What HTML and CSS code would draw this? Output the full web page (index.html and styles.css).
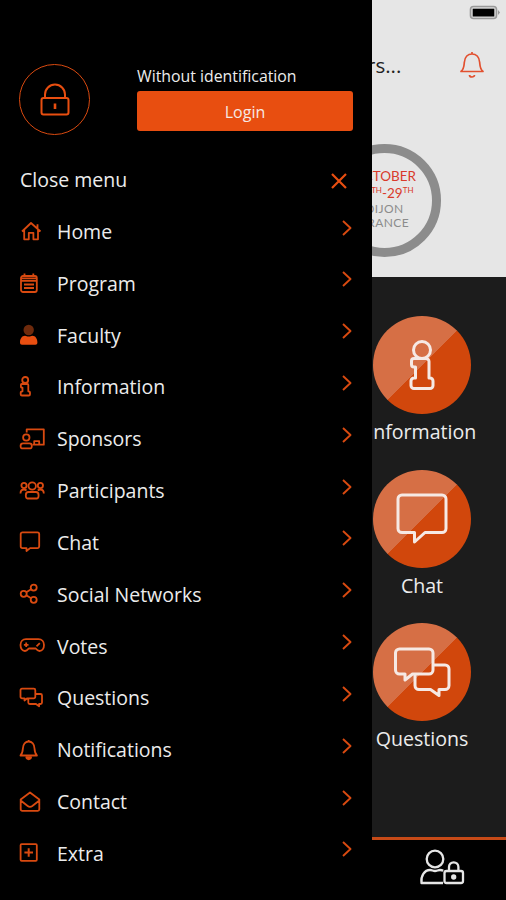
FILE: index.html
```
<!DOCTYPE html>
<html lang="en">
<head>
    <meta charset="UTF-8">
    <meta name="viewport" content="width=device-width, initial-scale=1.0">
    <title>Event App - Menu</title>
    <link rel="stylesheet" href="styles.css">
</head>
<body>
    <!-- Home screen, behind the menu -->
    <div class="page">
        <header class="header">
            <div class="status">
                <svg width="31" height="15" viewBox="0 0 31 15"><rect x="1.5" y="1.5" width="26" height="12" rx="3" fill="#ddd" stroke="#999" stroke-width="1.6"/><rect x="3.7" y="3.7" width="21.6" height="7.8" fill="#000"/><path d="M29 5v5l2-2.5z" fill="#999"/></svg>
            </div>
            <div class="title-bar">
                <span class="title">rs...</span>
                <svg class="bell" width="26" height="28" viewBox="0 0 26 28"><path d="M13 1v2M2 20.5c3-2.500 3-5 3.300-9C5.700 6 9 3 13 3s7.300 3 7.700 8.500c.3 4 .3 6.500 3.300 9zM10.500 24a2.500 2 0 0 0 5 0"/></svg>
            </div>
            <div class="badge">
                <span class="red">OCTOBER</span>
                <span class="red days">28<sup>TH</sup>-29<sup>TH</sup></span>
                <span>DIJON</span>
                <span>FRANCE</span>
            </div>
        </header>

        <main class="tiles">
            <div class="tile">
                <div class="disc">
                    <svg width="98" height="98" viewBox="0 0 98 98"><circle cx="49" cy="34" r="8.500"/><path d="M42 42.500H53a3 3 0 0 1 3 3V62h1a3 3 0 0 1 3 3v4.500a3 3 0 0 1-3 3H41a3 3 0 0 1-3-3V65a3 3 0 0 1 3-3h1.500V51H41a2.500 2.500 0 0 1-2.500-2.500V45a2.500 2.500 0 0 1 2.500-2.500z"/></svg>
                </div>
                <span>Information</span>
            </div>
            <div class="tile">
                <div class="disc">
                    <svg width="98" height="98" viewBox="0 0 98 98"><path d="M29 25H69a4 4 0 0 1 4 4V58.500a4 4 0 0 1-4 4H52L41.500 72V62.500H29a4 4 0 0 1-4-4V29a4 4 0 0 1 4-4z"/></svg>
                </div>
                <span>Chat</span>
            </div>
            <div class="tile">
                <div class="disc">
                    <svg width="98" height="98" viewBox="0 0 98 98"><path d="M26.500 26H56a4 4 0 0 1 4 4V47a4 4 0 0 1-4 4H39.500L32 57V51H26.500a4 4 0 0 1-4-4V30a4 4 0 0 1 4-4zM60 42H72a4 4 0 0 1 4 4V62.500a4 4 0 0 1-4 4H66V72.500L57.500 66.500H46a4 4 0 0 1-4-4V51"/></svg>
                </div>
                <span>Questions</span>
            </div>
        </main>

        <footer class="footer">
            <svg width="46" height="38" viewBox="0 0 46 38"><circle cx="16" cy="11" r="8.300"/><path d="M24 35H2.500c-1-7 3-13 8.500-13 2 0 3 1 5 1s3-1 5-1c1.200 0 2.200.2 3.200.8"/><rect x="25.500" y="23" width="18.500" height="12" rx="2"/><path d="M30 23v-4a4.700 4.700 0 0 1 9.400 0v4"/><circle cx="34.700" cy="29" r="1.500" fill="#e6e6e6"/></svg>
        </footer>
    </div>

    <!-- Side menu -->
    <nav class="drawer">
        <div class="account">
            <div class="avatar">
                <svg width="32" height="36" viewBox="0 0 32 36"><rect x="2.500" y="16" width="27" height="16.500" rx="2"/><path d="M6 16v-3.500a10 10 0 0 1 20 0V16"/><path d="M16 21.500v5.500" stroke-width="2.600"/></svg>
            </div>
            <div class="login">
                <span>Without identification</span>
                <button class="login-btn">Login</button>
            </div>
        </div>

        <div class="close">
            <span>Close menu</span>
            <svg width="18" height="18" viewBox="0 0 18 18"><path d="M2 2l14 14M16 2L2 16"/></svg>
        </div>

        <ul class="menu">
            <li>
                <svg class="icon" viewBox="0 0 26 22"><path d="M3 10.500L12 2l9.500 8.500M18.500 7V3.200M5.200 9v9.300h4.600v-6.500h4.600v6.500h4.600V9"/></svg>
                <span>Home</span>
                <svg class="chevron" viewBox="0 0 10 16"><path d="M1 1l7.500 7L1 15"/></svg>
            </li>
            <li>
                <svg class="icon" viewBox="0 0 26 22"><rect x="2" y="4" width="15.800" height="16" rx="2"/><path d="M5.500 1.500v3M14.300 1.500v3M2 6.300h16M2 8.800h16M5 12.500h10M5 16h10"/></svg>
                <span>Program</span>
                <svg class="chevron" viewBox="0 0 10 16"><path d="M1 1l7.500 7L1 15"/></svg>
            </li>
            <li>
                <svg class="icon solid" viewBox="0 0 26 22"><circle cx="9.700" cy="6" r="5.200" fill="#6e2a0c"/><path d="M1 18.500c0-4 2-6.800 5-6.800 1.500 0 2 .8 3.700.8s2.200-.8 3.700-.8c3 0 5 2.800 5 6.800 0 1.500-.8 2.200-2 2.200H3c-1.200 0-2-.7-2-2.200z"/></svg>
                <span>Faculty</span>
                <svg class="chevron" viewBox="0 0 10 16"><path d="M1 1l7.500 7L1 15"/></svg>
            </li>
            <li>
                <svg class="icon" viewBox="0 0 26 22"><circle cx="6.200" cy="4" r="3"/><path d="M2.700 8h5.600c.7 0 1 .4 1 1v6.300c1.300 0 1.700.4 1.700 1.400v1.500c0 .9-.4 1.300-1.300 1.300H3c-.9 0-1.300-.4-1.300-1.300v-1.500c0-1 .4-1.400 1.800-1.400v-3.600c-1.200 0-1.600-.3-1.600-1.200V9c0-.6.3-1 .8-1z"/></svg>
                <span>Information</span>
                <svg class="chevron" viewBox="0 0 10 16"><path d="M1 1l7.500 7L1 15"/></svg>
            </li>
            <li>
                <svg class="icon" viewBox="0 0 26 22"><path d="M7.700 4.500V1.300h17.100v15.400H13.500M15.200 16.500v-3.300h5v3.300"/><circle cx="7.300" cy="9.500" r="3.200"/><path d="M4 15.300h6.500c1.500 0 2.300 1 2.300 2.500s-.4 2.500-1.300 2.500h-8.700c-.9 0-1.200-1-1.200-2.500s.9-2.500 2.400-2.500z"/></svg>
                <span>Sponsors</span>
                <svg class="chevron" viewBox="0 0 10 16"><path d="M1 1l7.500 7L1 15"/></svg>
            </li>
            <li>
                <svg class="icon" viewBox="0 0 26 22"><circle cx="13.200" cy="6" r="3.700"/><circle cx="5" cy="5.500" r="2.600"/><circle cx="21.400" cy="5.500" r="2.600"/><path d="M9.500 12h7.400c1.600 0 2.700 1.200 2.700 3.300 0 2-.5 3.200-1.600 3.200H8.400c-1.100 0-1.600-1.200-1.600-3.200 0-2.100 1.100-3.300 2.700-3.300zM1.500 13.500c0-2.500 1.500-4 3.500-4 1 0 1.800.4 2.500 1M24.800 13.500c0-2.500-1.500-4-3.500-4-1 0-1.800.4-2.500 1"/></svg>
                <span>Participants</span>
                <svg class="chevron" viewBox="0 0 10 16"><path d="M1 1l7.500 7L1 15"/></svg>
            </li>
            <li>
                <svg class="icon" viewBox="0 0 26 22"><path d="M3.500 1.300h14.900a1.800 1.800 0 0 1 1.800 1.800v12.200a1.800 1.800 0 0 1-1.800 1.800h-7.300L7.500 20v-2.900h-4a1.800 1.800 0 0 1-1.800-1.800V3.100a1.800 1.800 0 0 1 1.800-1.800z"/></svg>
                <span>Chat</span>
                <svg class="chevron" viewBox="0 0 10 16"><path d="M1 1l7.500 7L1 15"/></svg>
            </li>
            <li>
                <svg class="icon" viewBox="0 0 26 22"><circle cx="4.700" cy="10.800" r="3"/><circle cx="14.700" cy="4.600" r="3"/><circle cx="14.700" cy="16.800" r="3"/><path d="M7.300 9.300l4.800-3M7.300 12.300l4.800 3"/></svg>
                <span>Social Networks</span>
                <svg class="chevron" viewBox="0 0 10 16"><path d="M1 1l7.500 7L1 15"/></svg>
            </li>
            <li>
                <svg class="icon" viewBox="0 0 26 22"><path d="M7 4.200h12.400c3.500 0 5.600 2.500 5.600 5.800s-1.800 6-4.500 6c-1.800 0-2.600-1-3.800-2.500H9.800C8.500 15 7.700 16 6 16c-2.800 0-4.500-2.700-4.500-6S3.600 4.200 7 4.200zM7.200 7.500v4.600M4.900 9.800h4.600M17.500 11.300l3.300-3.100"/></svg>
                <span>Votes</span>
                <svg class="chevron" viewBox="0 0 10 16"><path d="M1 1l7.500 7L1 15"/></svg>
            </li>
            <li>
                <svg class="icon" viewBox="0 0 26 22"><path d="M3 1.700h11.800a1.500 1.500 0 0 1 1.500 1.500v6.600a1.500 1.500 0 0 1-1.500 1.500H8.300L5.500 13.500v-2.200H3a1.500 1.500 0 0 1-1.500-1.500V3.200A1.500 1.500 0 0 1 3 1.700zM16.300 7h5.200a1.500 1.500 0 0 1 1.500 1.500v7a1.500 1.500 0 0 1-1.500 1.500h-1.400v2.300L17 17h-6.200a1.500 1.500 0 0 1-1.500-1.500v-4"/></svg>
                <span>Questions</span>
                <svg class="chevron" viewBox="0 0 10 16"><path d="M1 1l7.500 7L1 15"/></svg>
            </li>
            <li>
                <svg class="icon" viewBox="0 0 26 22"><path d="M9.700 1v1.200M1.500 16.500c2-2 2.200-3.700 2.400-7 .2-4.200 2.500-7 5.800-7s5.600 2.800 5.800 7c.2 3.300.4 5 2.400 7z"/><path d="M7.300 18.200h4.800c-.4 2.700-4.400 2.700-4.800 0z" fill="#e84e10"/></svg>
                <span>Notifications</span>
                <svg class="chevron" viewBox="0 0 10 16"><path d="M1 1l7.500 7L1 15"/></svg>
            </li>
            <li>
                <svg class="icon" viewBox="0 0 26 22"><path d="M1.700 8.500L11 1.500l9.300 7v9.800a1.500 1.500 0 0 1-1.500 1.500H3.200a1.500 1.500 0 0 1-1.500-1.500zM1.700 9.500l7 5.500c1.500 1.200 3 1.200 4.600 0l7-5.500"/></svg>
                <span>Contact</span>
                <svg class="chevron" viewBox="0 0 10 16"><path d="M1 1l7.500 7L1 15"/></svg>
            </li>
            <li>
                <svg class="icon" viewBox="0 0 26 22"><rect x="1.600" y="2.200" width="16.200" height="16.600" rx="1"/><path d="M9.700 6.200v8.600M5.400 10.500H14" stroke-width="2"/></svg>
                <span>Extra</span>
                <svg class="chevron" viewBox="0 0 10 16"><path d="M1 1l7.500 7L1 15"/></svg>
            </li>
        </ul>
    </nav>
</body>
</html>
```
FILE: styles.css
```
* {
    box-sizing: border-box;
}

body {
    margin: 0;
    width: 506px;
    height: 900px;
    overflow: hidden;
    position: relative;
    background-color: #000;
    color: #ececec;
    font-family: "Open Sans", "Noto Sans", sans-serif;
}

svg {
    display: block;
    fill: none;
    stroke-linejoin: round;
}

/* Home screen */
.page {
    height: 900px;
    display: flex;
    flex-direction: column;
}

.header {
    height: 277px;
    background-color: #e6e6e6;
}

.status {
    display: flex;
    justify-content: flex-end;
    padding: 5px 6px 0 0;
}

.title-bar {
    display: flex;
    align-items: center;
    justify-content: space-between;
    height: 28px;
    margin-top: 31px;
    padding: 0 21px 0 367px;
}

.title {
    color: #222;
    font-size: 20.500px;
}

.bell {
    stroke: #e2502f;
    stroke-width: 1.7;
}

.badge {
    width: 113px;
    height: 113px;
    margin: 65px 0 0 328px;
    padding-bottom: 3px;
    border: 9px solid #8c8c8c;
    border-radius: 50%;
    display: flex;
    flex-direction: column;
    align-items: center;
    justify-content: center;
    color: #8c8c8c;
    font-family: Lato, sans-serif;
    font-size: 12px;
    letter-spacing: 0.4px;
    line-height: 14px;
    white-space: nowrap;
}

.badge .red {
    color: #d93a2b;
    font-size: 13.500px;
    letter-spacing: 0;
    line-height: 17px;
}

.badge sup {
    font-size: 8px;
    line-height: 0;
}

.tiles {
    height: 560px;
    padding: 39px 0 0 362px;
    background-color: #1c1c1c;
}

.tile {
    width: 120px;
    height: 153.700px;
    display: flex;
    flex-direction: column;
    align-items: center;
    font-size: 19.600px;
    line-height: 36px;
}

.disc {
    width: 98px;
    height: 98px;
    border-radius: 50%;
    background: linear-gradient(135deg, #d66f45 50%, #d1470c 50.500%);
}

.disc svg {
    stroke: #f6e9e4;
    stroke-width: 3;
}

.footer {
    flex: 1;
    padding: 8px 0 0 419px;
    border-top: 3px solid #c64a17;
    background-color: #000;
}

.footer svg {
    stroke: #e6e6e6;
    stroke-width: 2.300;
}

.drawer {
    position: absolute;
    top: 0;
    left: 0;
    width: 372px;
    height: 900px;
    padding: 64px 19px 0;
    background-color: #000;
}

.account {
    display: flex;
    justify-content: space-between;
}

.avatar {
    width: 71px;
    height: 71px;
    display: flex;
    align-items: center;
    justify-content: center;
    border: 1.500px solid #d94a10;
    border-radius: 50%;
}

.avatar svg {
    stroke: #e84e10;
    stroke-width: 2;
}

.login {
    width: 216px;
    font-size: 15.850px;
    line-height: 25px;
}

.login-btn {
    display: block;
    width: 100%;
    height: 40px;
    margin-top: 2px;
    padding: 2px 0 0;
    border: none;
    border-radius: 3px;
    background-color: #e84e10;
    color: #f6e9e4;
    font-family: inherit;
    font-size: 16px;
}

.close {
    display: flex;
    align-items: center;
    justify-content: space-between;
    height: 30px;
    margin-top: 29px;
    padding: 0 5px 0 1px;
    font-size: 19.500px;
}

.close svg {
    margin-top: 3px;
    stroke: #e84e10;
    stroke-width: 2.200;
}

.menu {
    list-style: none;
    margin: 11.600px 0 0;
    padding: 0;
}

.menu li {
    display: flex;
    align-items: center;
    height: 51.830px;
    font-size: 19.500px;
}

.icon {
    width: 26px;
    height: 22px;
    margin-right: 12px;
    stroke: #d94a10;
    stroke-width: 1.800;
}

.solid {
    fill: #e84e10;
    stroke: none;
}

.chevron {
    width: 10px;
    height: 16px;
    margin: 0 1px 8px auto;
    stroke: #d94a10;
    stroke-width: 1.900;
}
```
